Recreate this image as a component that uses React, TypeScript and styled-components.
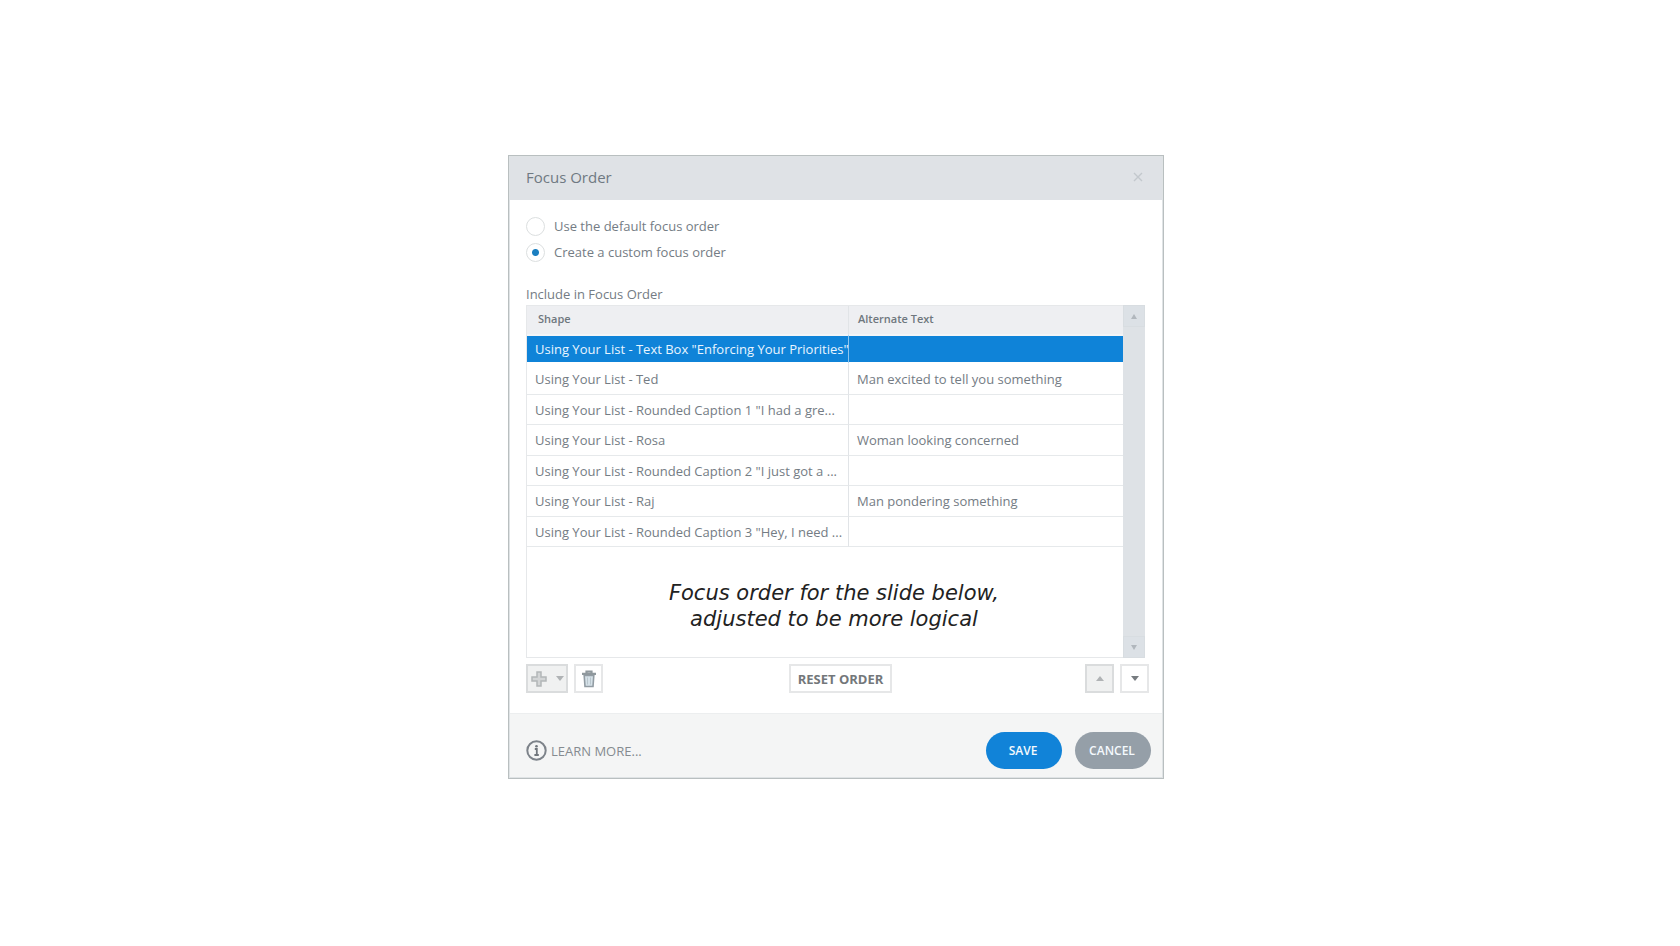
import React, { useState } from 'react';
import styled, { createGlobalStyle, css } from 'styled-components';

const Global = createGlobalStyle`
  *, *::before, *::after { box-sizing: border-box; }
  body { margin: 0; background: #fff; }
  body, button, input, table { font-family: "Open Sans", "Noto Sans", sans-serif; font-size: 13px; }
`;

const Page = styled.main`
  display: grid;
  grid-template-columns: minmax(0, 656px);
  justify-content: center;
  align-content: center;
  min-height: 100vh;
  padding: 0 8px 12px 0;
`;

const Dialog = styled.section`
  display: flex;
  flex-direction: column;
  padding: 1px;
  border: 1px solid #b9bfc0;
  background: #dfe3e5;
  color: #747c84;
`;

const Header = styled.header`
  display: flex;
  align-items: center;
  justify-content: space-between;
  height: 43px;
  padding: 0 16px 4px;
  background: #dfe2e6;
`;

const Title = styled.h1`
  margin: 0;
  font-size: 15px;
  font-weight: 400;
  line-height: 20px;
  color: #6f7982;
`;

const CloseButton = styled.button`
  display: grid;
  place-items: center;
  width: 16px;
  height: 16px;
  padding: 0;
  border: 0;
  background: none;
  color: #c3c8cd;
`;

const Content = styled.div`
  display: flex;
  flex-direction: column;
  padding: 16px 13px 20px 16px;
  background: #fff;
`;

const Choices = styled.fieldset`
  display: flex;
  flex-direction: column;
  gap: 6px;
  margin: 0;
  padding: 0;
  border: 0;
`;

const Choice = styled.label`
  display: flex;
  align-items: center;
  gap: 9px;
  line-height: 20px;
`;

const Radio = styled.input`
  appearance: none;
  width: 19px;
  height: 19px;
  margin: 0;
  border: 1px solid #dcdfe0;
  border-radius: 50%;
  background: #fff;
  &:checked { background: radial-gradient(circle, #1b7fc0 0 3px, #fff 4px); }
`;

const ListLabel = styled.h2`
  margin: 22px 0 1px;
  font-size: 13px;
  font-weight: 400;
  line-height: 20px;
`;

const ListFrame = styled.div`
  display: flex;
  height: 353px;
  margin-right: 4px;
`;

const ListBody = styled.div`
  display: flex;
  flex: 1;
  flex-direction: column;
  min-width: 0;
  border: 1px solid #e6e8ea;
  border-right: 0;
`;

const Table = styled.table`
  width: 100%;
  table-layout: fixed;
  border-collapse: separate;
  border-spacing: 0;
`;

const HeadCell = styled.th`
  height: 28px;
  padding: 0 8px 2px 11px;
  border-right: 1px solid #e1e4e7;
  background: #eeeff2;
  font-size: 11px;
  font-weight: 600;
  line-height: 20px;
  text-align: left;
  color: #6f777e;
  &:first-child { width: 322px; }
  &:last-child { padding-left: 9px; border-right: 0; }
`;

const Row = styled.tr<{ $selected: boolean }>`
  td {
    height: 30px;
    padding: 0 0 0 8px;
    border-bottom: 1px solid #e6e9eb;
    line-height: 20px;
    white-space: nowrap;
    &:first-child { border-right: 1px solid #e1e4e7; }
  }
  &:nth-child(even) td { height: 31px; }
  ${({ $selected }) => $selected && css`
    td {
      border-top: 2px solid #f3f5f7;
      border-bottom: 2px solid #fff;
      background: #0f83d8;
      color: #e9f5ff;
      &:first-child { border-right-color: #8cc4ed; }
    }
  `}
`;

const Caption = styled.p`
  display: grid;
  flex: 1;
  place-items: center;
  margin: 0;
  padding: 8px 0 0 18px;
  font-family: "DejaVu Sans", Verdana, sans-serif;
  font-size: 21px;
  font-style: italic;
  line-height: 26px;
  text-align: center;
  color: #222;
`;

const Scrollbar = styled.div`
  display: flex;
  flex-direction: column;
  justify-content: space-between;
  width: 22px;
  background: #dee2e6;
`;

const ScrollButton = styled.button`
  display: grid;
  place-items: center;
  height: 22px;
  padding: 0;
  border: 1px solid #d8dde1;
  background: #dce1e6;
  color: #b1b7bd;
`;

const Toolbar = styled.div`
  display: grid;
  grid-template-columns: 1fr auto 1fr;
  align-items: center;
  margin-top: 6px;
`;

const ToolGroup = styled.div<{ $end?: boolean }>`
  display: flex;
  gap: 6px;
  justify-content: ${({ $end }) => ($end ? 'flex-end' : 'flex-start')};
`;

const ToolButton = styled.button<{ $muted?: boolean; $wide?: boolean }>`
  display: flex;
  align-items: center;
  justify-content: center;
  gap: 9px;
  width: ${({ $wide }) => ($wide ? 42 : 29)}px;
  height: 29px;
  padding: 0;
  border: 2px solid ${({ $muted }) => ($muted ? '#dadcdd' : '#e6e7e8')};
  background: ${({ $muted }) => ($muted ? '#f0f1f1' : '#fff')};
  color: ${({ $muted }) => ($muted ? '#b0b3b5' : '#777c80')};
`;

const ResetButton = styled(ToolButton)`
  width: 103px;
  margin-left: 6px;
  font-size: 13px;
  font-weight: 700;
  color: #73777a;
`;

const Footer = styled.footer`
  display: flex;
  align-items: center;
  height: 64px;
  padding: 10px 11px 0 16px;
  border-top: 1px solid #eceeef;
  background: #f4f5f5;
`;

const LearnLink = styled.a`
  display: flex;
  align-items: center;
  gap: 4px;
  margin-right: auto;
  line-height: 20px;
  color: #858b90;
  text-decoration: none;
`;

const PillButton = styled.button<{ $primary?: boolean }>`
  width: 76px;
  height: 37px;
  padding: 0 2px 0 0;
  border: 0;
  border-radius: 19px;
  font-size: 12px;
  font-weight: 600;
  color: #f4f9fd;
  background: ${({ $primary }) => ($primary ? '#1183d8' : '#959fa8')};
  & + & { margin-left: 13px; }
`;

const rows = [
  ['Using Your List - Text Box "Enforcing Your Priorities"', ''],
  ['Using Your List - Ted', 'Man excited to tell you something'],
  ['Using Your List - Rounded Caption 1 "I had a gre...', ''],
  ['Using Your List - Rosa', 'Woman looking concerned'],
  ['Using Your List - Rounded Caption 2 "I just got a ...', ''],
  ['Using Your List - Raj', 'Man pondering something'],
  ['Using Your List - Rounded Caption 3 "Hey, I need ...', ''],
];

function Triangle({ up = false, width = 8 }: { up?: boolean; width?: number }) {
  return (
    <svg width={width} height="5" viewBox="0 0 8 5" preserveAspectRatio="none" aria-hidden="true">
      <path d={up ? 'M0 5 4 0l4 5z' : 'M0 0h8L4 5z'} fill="currentColor" />
    </svg>
  );
}

function PlusIcon() {
  return (
    <svg width="16" height="16" viewBox="0 0 16 16" aria-hidden="true">
      <path d="M6 1h4v5h5v4h-5v5H6v-5H1V6h5z" fill="#d3d5d6" stroke="#b3b6b8" strokeWidth="1.5" />
    </svg>
  );
}

function TrashIcon() {
  return (
    <svg width="16" height="18" viewBox="0 0 16 18" fill="none" aria-hidden="true">
      <path d="M3.2 5.5h9.6l-.8 11H4z" fill="#d5e1e8" stroke="#929ca3" strokeWidth="1.6" />
      <path d="M6.5 7.5v7M9.5 7.5v7" stroke="#b9c6cd" />
      <path d="M1 3.8h14M5.5 3V1.5h5V3" stroke="#8f989d" strokeWidth="2.2" />
    </svg>
  );
}

function InfoIcon() {
  return (
    <svg width="21" height="21" viewBox="0 0 21 21" fill="none" aria-hidden="true">
      <circle cx="10.5" cy="10.5" r="9.2" stroke="#7d838a" strokeWidth="2" />
      <path d="M8.8 9h2v6M8.4 15h4.4" stroke="#70767c" strokeWidth="1.8" />
      <circle cx="10.5" cy="6.2" r="1.3" fill="#70767c" />
    </svg>
  );
}

export default function App() {
  const [order, setOrder] = useState('custom');
  const [selected, setSelected] = useState(0);

  return (
    <>
      <Global />
      <Page>
        <Dialog role="dialog" aria-labelledby="dialog-title">
          <Header>
            <Title id="dialog-title">Focus Order</Title>
            <CloseButton aria-label="Close">
              <svg width="10" height="10" viewBox="0 0 10 10" aria-hidden="true">
                <path d="M1 1l8 8M9 1 1 9" stroke="currentColor" strokeWidth="1.4" />
              </svg>
            </CloseButton>
          </Header>

          <Content>
            <Choices>
              <Choice>
                <Radio type="radio" name="order" checked={order === 'default'} onChange={() => setOrder('default')} />
                Use the default focus order
              </Choice>
              <Choice>
                <Radio type="radio" name="order" checked={order === 'custom'} onChange={() => setOrder('custom')} />
                Create a custom focus order
              </Choice>
            </Choices>

            <ListLabel id="list-label">Include in Focus Order</ListLabel>
            <ListFrame>
              <ListBody>
                <Table aria-labelledby="list-label">
                  <thead>
                    <tr>
                      <HeadCell scope="col">Shape</HeadCell>
                      <HeadCell scope="col">Alternate Text</HeadCell>
                    </tr>
                  </thead>
                  <tbody>
                    {rows.map(([shape, alt], i) => (
                      <Row key={shape} $selected={i === selected} onClick={() => setSelected(i)}>
                        <td>{shape}</td>
                        <td>{alt}</td>
                      </Row>
                    ))}
                  </tbody>
                </Table>
                <Caption>
                  <span>
                    Focus order for the slide below,
                    <br />
                    adjusted to be more logical
                  </span>
                </Caption>
              </ListBody>
              <Scrollbar>
                <ScrollButton aria-label="Scroll up"><Triangle up width={6} /></ScrollButton>
                <ScrollButton aria-label="Scroll down"><Triangle width={6} /></ScrollButton>
              </Scrollbar>
            </ListFrame>

            <Toolbar>
              <ToolGroup>
                <ToolButton $muted $wide aria-label="Add"><PlusIcon /><Triangle /></ToolButton>
                <ToolButton aria-label="Delete"><TrashIcon /></ToolButton>
              </ToolGroup>
              <ResetButton>RESET ORDER</ResetButton>
              <ToolGroup $end>
                <ToolButton $muted aria-label="Move up"><Triangle up /></ToolButton>
                <ToolButton aria-label="Move down"><Triangle /></ToolButton>
              </ToolGroup>
            </Toolbar>
          </Content>

          <Footer>
            <LearnLink href="#learn-more"><InfoIcon />LEARN MORE...</LearnLink>
            <PillButton $primary>SAVE</PillButton>
            <PillButton>CANCEL</PillButton>
          </Footer>
        </Dialog>
      </Page>
    </>
  );
}
